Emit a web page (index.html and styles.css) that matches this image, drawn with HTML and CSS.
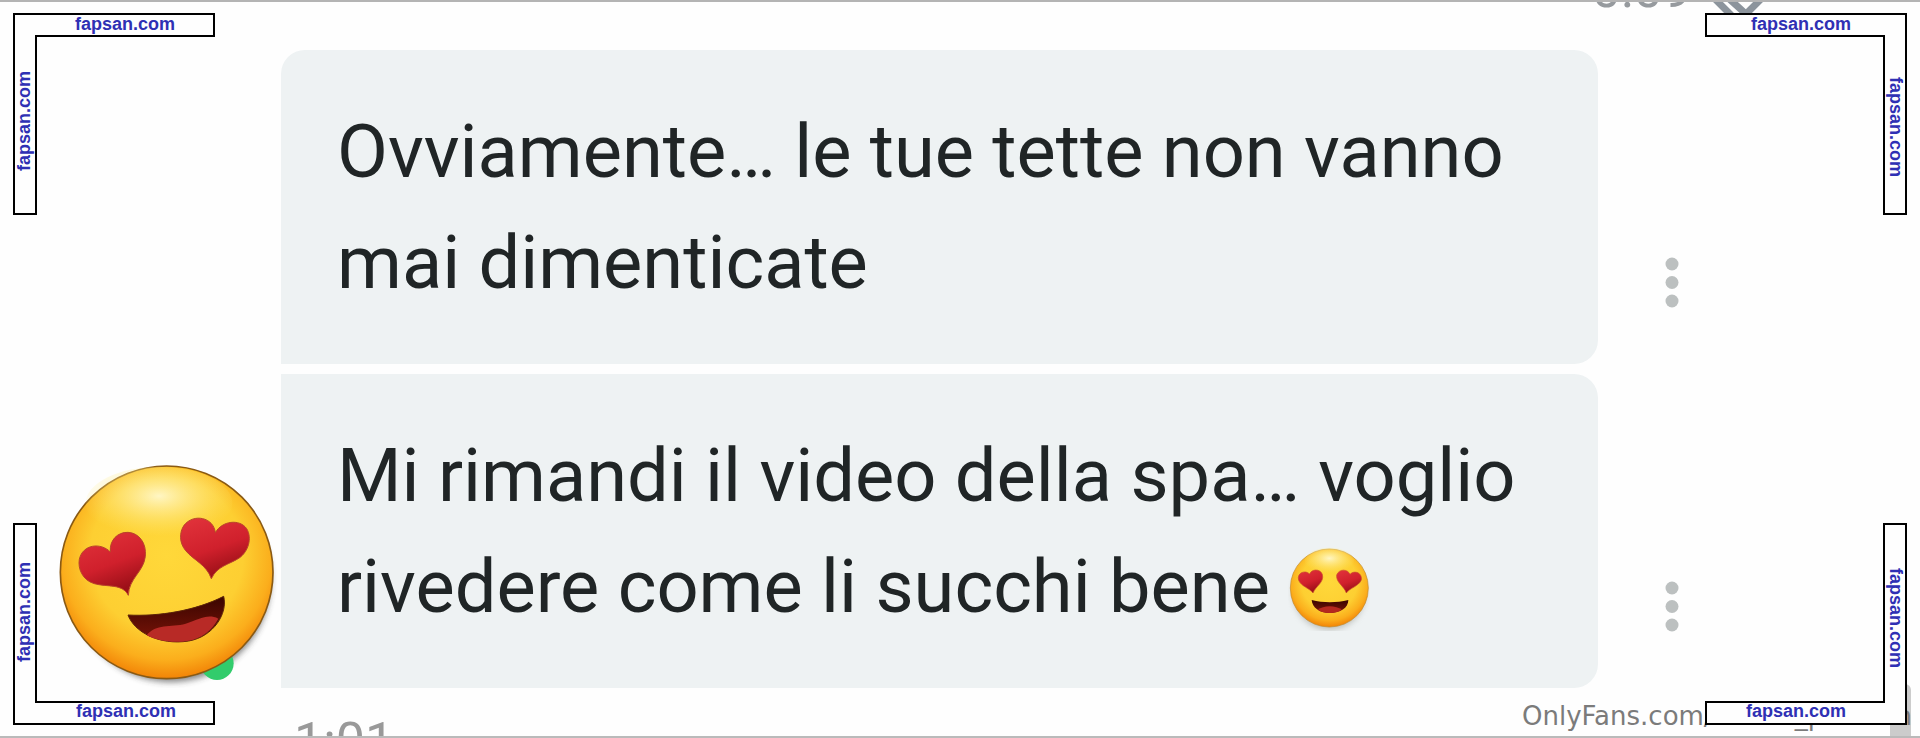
FILE: index.html
```html
<!DOCTYPE html>
<html lang="it">
<head>
<meta charset="utf-8">
<title>Chat</title>
<link rel="stylesheet" href="styles.css">
</head>
<body>
<main class="page">
  <header class="sent">
    <time>0:09</time>
    <svg class="checks" width="60" height="44" viewBox="0 0 60 44" aria-hidden="true">
      <path d="M0 24L20 44M14 24L34 42L56 20" fill="none" stroke="#8c949c" stroke-width="7"/>
    </svg>
  </header>

  <section class="thread">
    <p class="bubble first">Ovviamente… le tue tette non vanno<br>mai dimenticate</p>
    <button class="more" aria-label="Altro">
      <svg width="14" height="52" viewBox="0 0 14 52"><g fill="#bcc0c0"><circle cx="7" cy="7" r="6.5"/><circle cx="7" cy="25.5" r="6.5"/><circle cx="7" cy="44" r="6.5"/></g></svg>
    </button>

    <svg class="avatar" width="223" height="228" viewBox="171 60 669 684" role="img" aria-label="Avatar">
      <defs>
        <radialGradient id="face" cx=".5" cy=".42" r=".6">
          <stop offset="0" stop-color="#ffd83a"/><stop offset=".6" stop-color="#fdcf32"/><stop offset=".82" stop-color="#fbae1c"/><stop offset="1" stop-color="#f07a02"/>
        </radialGradient>
        <radialGradient id="shine" cx=".5" cy=".4" r=".55">
          <stop offset="0" stop-color="#fff6c4"/><stop offset="1" stop-color="#ffe873" stop-opacity="0"/>
        </radialGradient>
        <linearGradient id="heart" x1="0" y1="0" x2=".4" y2="1">
          <stop offset="0" stop-color="#e2343c"/><stop offset=".6" stop-color="#d0202c"/><stop offset="1" stop-color="#9c1018"/>
        </linearGradient>
        <linearGradient id="mouth" x1="0" y1="0" x2="0" y2="1">
          <stop offset="0" stop-color="#3a0500"/><stop offset="1" stop-color="#7a1408"/>
        </linearGradient>
        <filter id="soft" x="-20%" y="-20%" width="140%" height="140%"><feGaussianBlur stdDeviation="10"/></filter>
      </defs>
      <ellipse cx="515" cy="420" rx="300" ry="306" fill="#333" opacity=".6" filter="url(#soft)"/>
      <circle cx="654" cy="670" r="50" fill="#32cc6c"/>
      <circle cx="503" cy="397" r="319" fill="url(#face)" stroke="#8a5a14" stroke-width="5"/>
      <ellipse cx="480" cy="190" rx="220" ry="110" fill="url(#shine)"/>
      <g fill="url(#heart)" stroke="#b8442a" stroke-width="3">
        <path d="M388 466C370 430 325 442 286 431C250 421 236 385 241 358C251 312 306 307 334 336C331 300 356 276 387 277C421 279 443 310 439 349C434 396 390 414 388 466Z"/>
        <path d="M637 416C623 374 585 362 560 332C540 308 541 277 555 256C584 219 644 232 649 278C669 242 722 236 743 266C760 294 748 334 722 353C691 374 655 377 637 416Z"/>
      </g>
      <path d="M387 525C480 530 590 512 674 469C687 520 644 590 569 603C480 617 405 575 387 525Z" fill="url(#mouth)" stroke="#5b2408" stroke-width="3"/>
      <path d="M443 586C470 550 515 563 560 551C600 539 625 520 658 536C640 570 606 596 569 602C520 611 475 602 443 586Z" fill="#b82a26"/>
    </svg>
    <p class="bubble last">Mi rimandi il video della spa… voglio<br>rivedere come li succhi bene <svg class="emoji" width="82" height="86" viewBox="57 42 246 258" role="img" aria-label="😍">
      <ellipse cx="181" cy="186" rx="108" ry="110" fill="#8a8a80" opacity=".5" filter="url(#soft)"/>
      <circle cx="181" cy="171" r="117" fill="url(#face)" stroke="#c08a2a" stroke-width="2"/>
      <ellipse cx="181" cy="90" rx="74" ry="40" fill="url(#shine)"/>
      <g fill="url(#heart)" stroke="#c8502a" stroke-width="2">
        <path d="M132 186C122 172 96 166 89 148C82 126 108 115 122 129C127 114 153 112 160 130C167 154 140 165 132 186Z"/>
        <path d="M232 186C225 165 200 154 203 132C210 112 237 114 243 130C257 115 281 127 277 147C269 166 242 171 232 186Z"/>
      </g>
      <path d="M128 207C163 216 202 216 238 207C238 231 213 246 182 246C151 246 130 230 128 207Z" fill="url(#mouth)"/>
      <path d="M147 236C162 222 202 222 218 236C200 249 164 249 147 236Z" fill="#b5281f"/>
    </svg></p>
    <button class="more" aria-label="Altro">
      <svg width="14" height="52" viewBox="0 0 14 52"><g fill="#bcc0c0"><circle cx="7" cy="7" r="6.5"/><circle cx="7" cy="25.5" r="6.5"/><circle cx="7" cy="44" r="6.5"/></g></svg>
    </button>
  </section>

  <footer class="received"><time>1:01</time></footer>

  <div class="thumb"></div>
  <div class="credit"><span>OnlyFans.com/</span><span class="user">_p</span><span class="tail">n</span></div>

  <svg class="corner top left" viewBox="0 0 202 202">
    <path d="M1 1H201V23H23V201H1Z"/>
    <text x="62" y="17">fapsan.com</text>
    <text transform="translate(17 158) rotate(-90)">fapsan.com</text>
  </svg>
  <svg class="corner top right" viewBox="0 0 202 202">
    <path d="M201 1H1V23H179V201H201Z"/>
    <text x="46" y="17">fapsan.com</text>
    <text transform="translate(185 64) rotate(90)">fapsan.com</text>
  </svg>
  <svg class="corner bottom left" viewBox="0 0 202 202">
    <path d="M1 201H201V179H23V1H1Z"/>
    <text x="63" y="194">fapsan.com</text>
    <text transform="translate(17 139) rotate(-90)">fapsan.com</text>
  </svg>
  <svg class="corner bottom right" viewBox="0 0 202 202">
    <path d="M201 201H1V179H179V1H201Z"/>
    <text x="41" y="194">fapsan.com</text>
    <text transform="translate(185 45) rotate(90)">fapsan.com</text>
  </svg>
</main>
</body>
</html>
```
FILE: styles.css
```css
* {
  box-sizing: border-box;
}

body {
  margin: 0;
  background: #fefefe;
  color: #202526;
  font-family: Roboto, sans-serif;
}

.page {
  position: relative;
  display: flex;
  flex-direction: column;
  height: 100vh;
  overflow: hidden;
  border-top: 2px solid #b4b4b4;
  border-bottom: 2px solid #bababa;
}

.sent {
  display: flex;
  flex: none;
  justify-content: flex-end;
  gap: 20px;
  height: 86px;
  margin-top: -38px;
  padding-right: 148px;
  color: #969a9e;
  font-size: 52px;
  line-height: 52px;
}

.checks {
  margin-top: 8px;
}

.thread {
  display: grid;
  flex: none;
  grid-template-columns: 281px 1fr 322px;
  gap: 10px 0;
  align-items: end;
}

.bubble {
  grid-column: 2;
  margin: 0;
  padding: 46px 56px;
  background: #eef2f3;
  font-size: 74px;
  line-height: 111px;
  white-space: nowrap;
}

.first {
  border-radius: 24px 24px 24px 0;
}

.last {
  border-radius: 0 24px 24px 0;
}

.emoji {
  vertical-align: -19px;
}

.avatar {
  display: block;
  grid-column: 1;
  justify-self: end;
  margin-right: 2px;
}

.more {
  grid-column: 3;
  justify-self: start;
  margin: 0 0 55px 67px;
  padding: 0;
  border: 0;
  background: none;
  line-height: 0;
}

.received {
  flex: none;
  margin-top: 28px;
  padding-left: 294px;
  color: #999;
  font-size: 52px;
  line-height: 52px;
}

.thumb {
  position: absolute;
  right: 9px;
  bottom: 0;
  width: 21px;
  height: 52px;
  border-radius: 6px 6px 0 0;
  background: #ccc;
}

.credit {
  position: absolute;
  right: 8px;
  bottom: 5px;
  display: flex;
  width: 390px;
  color: #7b7b7b;
  font-family: "DejaVu Sans", sans-serif;
  font-size: 26px;
  line-height: 30px;
}

.user {
  margin-left: 82px;
}

.tail {
  margin-left: auto;
}

.corner {
  position: absolute;
  width: 202px;
  height: 202px;
}

.corner path {
  fill: #fefefe;
  stroke: #000;
  stroke-width: 2px;
}

.corner text {
  fill: #2f30b4;
  font: bold 18px "Liberation Sans", Arial, sans-serif;
}

.top {
  top: 11px;
}

.bottom {
  bottom: 11px;
}

.left {
  left: 13px;
}

.right {
  right: 13px;
}
```
